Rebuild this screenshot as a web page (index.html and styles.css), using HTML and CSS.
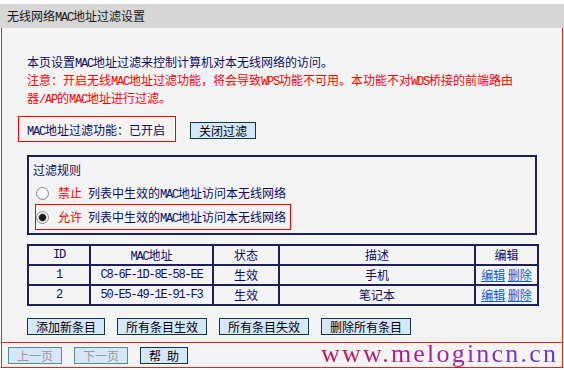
FILE: index.html
```
<!DOCTYPE html>
<html lang="zh-CN">
<head>
  <meta charset="UTF-8">
  <title>无线网络MAC地址过滤设置</title>
  <link rel="stylesheet" href="styles.css">
</head>
<body>
  <div class="page">
    <div class="title">无线网络<span class="en">MAC</span>地址过滤设置</div>

    <div class="panel">
      <div class="content">
        <p>本页设置<span class="en">MAC</span>地址过滤来控制计算机对本无线网络的访问。</p>
        <p class="note">注意：开启无线<span class="en">MAC</span>地址过滤功能，将会导致<span class="en">WPS</span>功能不可用。本功能不对<span class="en">WDS</span>桥接的前端路由<br>器<span class="en">/AP</span>的<span class="en">MAC</span>地址进行过滤。</p>

        <div class="status-row">
          <span class="status"><span class="en">MAC</span>地址过滤功能：已开启</span>
          <button class="btn status-btn">关闭过滤</button>
        </div>

        <div class="rules">
          <div class="rules-title">过滤规则</div>
          <label class="rule first">
            <input type="radio" name="rule">
            <span class="rule-text"><span class="verb">禁止</span>列表中生效的<span class="en">MAC</span>地址访问本无线网络</span>
          </label>
          <label class="rule picked">
            <input type="radio" name="rule" checked>
            <span class="rule-text"><span class="verb">允许</span>列表中生效的<span class="en">MAC</span>地址访问本无线网络</span>
          </label>
        </div>

        <table class="list">
          <colgroup>
            <col class="c-id">
            <col class="c-mac">
            <col class="c-state">
            <col class="c-desc">
            <col class="c-edit">
          </colgroup>
          <thead>
            <tr>
              <th class="en">ID</th>
              <th><span class="en">MAC</span>地址</th>
              <th>状态</th>
              <th>描述</th>
              <th>编辑</th>
            </tr>
          </thead>
          <tbody>
            <tr>
              <td class="en">1</td>
              <td class="en">C8-6F-1D-8E-58-EE</td>
              <td>生效</td>
              <td>手机</td>
              <td><a href="#">编辑</a> <a href="#">删除</a></td>
            </tr>
            <tr>
              <td class="en">2</td>
              <td class="en">50-E5-49-1E-91-F3</td>
              <td>生效</td>
              <td>笔记本</td>
              <td><a href="#">编辑</a> <a href="#">删除</a></td>
            </tr>
          </tbody>
        </table>

        <div class="actions">
          <button class="btn">添加新条目</button>
          <button class="btn">所有条目生效</button>
          <button class="btn">所有条目失效</button>
          <button class="btn">删除所有条目</button>
        </div>
      </div>

      <div class="footer">
        <button class="btn" disabled>上一页</button>
        <button class="btn" disabled>下一页</button>
        <button class="btn">帮<span class="gap"> </span>助</button>
      </div>
    </div>

    <div class="watermark">www.melogincn.cn</div>
  </div>
</body>
</html>
```

FILE: styles.css
```
body {
  margin: 0;
  background: #fff;
  font-family: "Noto Sans CJK SC", sans-serif;
  font-size: 12px;
  color: #0c0c66;
}
.page {
  position: relative;
  width: 564px;
  padding-top: 4px;
}
.en {
  font-family: "Liberation Mono", "Noto Sans CJK SC", monospace;
  font-size: 12px;
  letter-spacing: -1.2px;
  line-height: 1;
}
.title {
  height: 24px;
  line-height: 24px;
  padding-left: 7px;
  background: #d6d6d6;
  color: #1a1a1a;
}
.panel {
  width: 562px;
  margin-left: 1px;
  box-sizing: border-box;
  border: 1px solid #e2231a;
  border-top: 0;
  background: #f4f4f4;
}
.content {
  padding: 25px 25px 7px 25px;
  border-bottom: 1px solid #e2231a;
}
p {
  margin: 0;
  line-height: 18px;
}
.note {
  color: #ff0000;
}

.status-row {
  display: flex;
  align-items: center;
  height: 26px;
  margin-top: 9px;
}
.status {
  width: 158px;
  height: 26px;
  line-height: 26px;
  margin-left: -9px;
  padding-left: 8px;
  box-sizing: border-box;
  border: 1px solid #ff0000;
}
.status-btn {
  margin-left: 14px;
  margin-top: 3px;
}

.btn {
  height: 17px;
  padding: 0 8px;
  border: 1px solid #0f3a3a;
  background: #d6e6fb;
  color: #000;
  font-family: "Noto Sans CJK SC", sans-serif;
  font-size: 12px;
  line-height: 15px;
}
.btn:disabled {
  color: #9a9a9a;
  border-color: #5a8a8a;
}
.gap {
  display: inline-block;
  width: 6px;
}

.rules {
  width: 510px;
  margin-top: 13px;
  box-sizing: border-box;
  border: 2px solid #1e1e5c;
  padding: 4px 0 3px 4px;
}
.rules-title {
  line-height: 18px;
}
.rule {
  display: flex;
  align-items: center;
  width: 256px;
  height: 24px;
  margin-left: 2px;
  box-sizing: border-box;
}
.rule.first {
  margin-top: 2px;
}
.rule.picked {
  height: 26px;
  margin-top: -1px;
  border: 1px solid #ff0000;
}
.rule-text {
  line-height: 18px;
  white-space: nowrap;
}
.rule input {
  appearance: none;
  width: 13px;
  height: 13px;
  margin: 0 9px 0 1px;
  border: 1px solid #8a8a8a;
  border-radius: 50%;
  background: radial-gradient(circle at 50% 40%, #ffffff 40%, #dcdcdc 100%);
}
.rule.picked input {
  margin-left: 0;
}
.rule input:checked {
  background: radial-gradient(circle, #1a1a1a 0 3px, #6a6a6a 3.5px, #ffffff 4.5px, #dcdcdc 100%);
}
.verb {
  margin-right: 6px;
  color: #ff0000;
}

.list {
  width: 510px;
  margin-top: 9px;
  border-collapse: collapse;
  table-layout: fixed;
}
.c-id { width: 62px; }
.c-mac { width: 123px; }
.c-state { width: 66px; }
.c-desc { width: 196px; }
.c-edit { width: 63px; }
.list th,
.list td {
  height: 18px;
  padding: 0;
  border: 2px solid #1e1e5c;
  text-align: center;
  font-weight: normal;
  line-height: 16px;
}
.list a {
  color: #0a5fd0;
}

.actions {
  display: flex;
  gap: 12px;
  margin-top: 12px;
}

.footer {
  display: flex;
  gap: 12px;
  height: 24px;
  padding: 4px 6px 0;
  box-sizing: border-box;
}

.watermark {
  position: absolute;
  left: 321px;
  top: 339px;
  font-family: "Liberation Serif", serif;
  font-size: 26px;
  line-height: 30px;
  letter-spacing: 2.2px;
  background: linear-gradient(90deg, #d0104c, #a0289a 55%, #5a3ad0);
  -webkit-background-clip: text;
  background-clip: text;
  color: transparent;
}
```
